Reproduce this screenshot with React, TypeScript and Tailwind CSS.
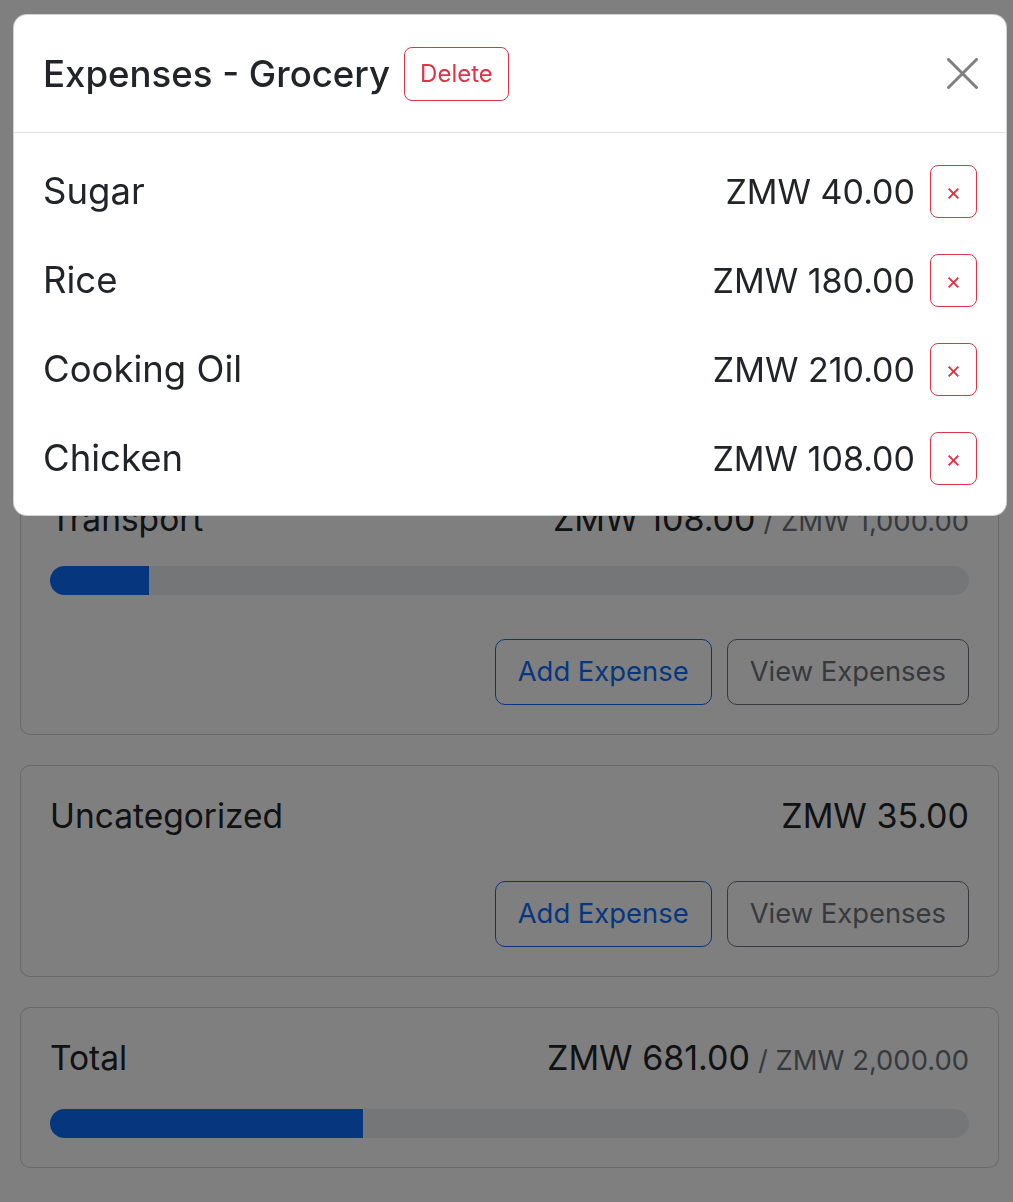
type Budget = {
  name: string;
  spent: number;
  max?: number;
};

const budgets: Budget[] = [
  { name: 'Grocery', spent: 538, max: 1000 },
  { name: 'Transport', spent: 108, max: 1000 },
  { name: 'Uncategorized', spent: 35 },
];

const expenses = [
  { id: 1, description: 'Sugar', amount: 40 },
  { id: 2, description: 'Rice', amount: 180 },
  { id: 3, description: 'Cooking Oil', amount: 210 },
  { id: 4, description: 'Chicken', amount: 108 },
];

const fmt = (n: number) =>
  'ZMW ' + n.toLocaleString('en-US', { minimumFractionDigits: 2, maximumFractionDigits: 2 });

function BudgetCard({ name, spent, max, isTotal }: Budget & { isTotal?: boolean }) {
  return (
    <div className="border border-black/[.175] rounded-[10px] p-[29px] bg-white">
      <div className="flex items-baseline justify-between h-[42px]">
        <span className="text-[33.5px] leading-[42px]">{name}</span>
        <span className="flex items-baseline">
          <span className="text-[34px] leading-[42px]">{fmt(spent)}</span>
          {max && <span className="text-[27.4px] text-[#6c757d] ml-[8px]">/ {fmt(max)}</span>}
        </span>
      </div>
      {max && (
        <div
          className={`${isTotal ? 'mt-[30px]' : 'mt-[26px]'} h-[29px] rounded-full bg-[#e9ecef] overflow-hidden flex`}>
          <div className="h-full bg-[#0d6efd]" style={{ width: `${(spent / max) * 100}%` }} />
        </div>
      )}
      {!isTotal && (
        <div className="mt-[44px] flex justify-end gap-[15px]">
          <button className="h-[66px] px-[22px] rounded-[10px] border border-[#0d6efd] text-[#0d6efd] text-[27.4px]">
            Add Expense
          </button>
          <button className="h-[66px] px-[22px] rounded-[10px] border border-[#6c757d] text-[#6c757d] text-[27.4px]">
            View Expenses
          </button>
        </div>
      )}
    </div>
  );
}

export default function App() {
  const total = 681;
  return (
    <div className="relative h-[1202px] bg-white text-[#212529] font-['Inter','Noto_Sans',sans-serif] overflow-hidden">
      <div className="pl-[20px] pr-[14px] pt-[38px] flex flex-col gap-[30px]">
        <div className="flex items-center justify-between h-[103px]">
          <span className="text-[48px] font-medium">Budgets</span>
          <div className="flex gap-[15px]">
            <button className="h-[66px] px-[22px] rounded-[10px] bg-[#0d6efd] text-white text-[28px]">Add Budget</button>
            <button className="h-[66px] px-[22px] rounded-[10px] border border-[#0d6efd] text-[#0d6efd] text-[28px]">
              Add Expense
            </button>
          </div>
        </div>
        {budgets.map((b) => (
          <BudgetCard key={b.name} {...b} />
        ))}
        <BudgetCard name="Total" spent={total} max={2000} isTotal />
      </div>

      <div className="fixed inset-0 bg-black/50" />

      <div className="absolute left-[13px] top-[14px] w-[994px] bg-white rounded-[14px] border border-black/[.175] overflow-hidden">
        <div className="h-[118px] flex items-center justify-between pl-[29px] pr-[27px] border-b border-[#dee2e6]">
          <div className="flex items-center gap-[14px]">
            <span className="text-[36.6px] font-medium leading-[44px]">Expenses - Grocery</span>
            <button className="h-[54px] px-[15px] rounded-[8px] border border-[#dc3545] text-[#dc3545] text-[24px]">
              Delete
            </button>
          </div>
          <svg width="31" height="31" viewBox="0 0 31 31" className="mr-[1px]">
            <path d="M1.5 1.5 L29.5 29.5 M29.5 1.5 L1.5 29.5" stroke="#000" strokeOpacity="0.5" strokeWidth="3" strokeLinecap="round" />
          </svg>
        </div>
        <div className="px-[29px] pt-[32px] pb-[30px] flex flex-col gap-[36px]">
          {expenses.map((e) => (
            <div key={e.id} className="flex items-center justify-between h-[53px]">
              <span className="text-[36.5px]">{e.description}</span>
              <div className="flex items-center gap-[15px]">
                <span className="text-[34px]">{fmt(e.amount)}</span>
                <button className="w-[47px] h-[53px] rounded-[8px] border border-[#dc3545] text-[#dc3545] text-[24px] leading-none">
                  ×
                </button>
              </div>
            </div>
          ))}
        </div>
      </div>
    </div>
  );
}
